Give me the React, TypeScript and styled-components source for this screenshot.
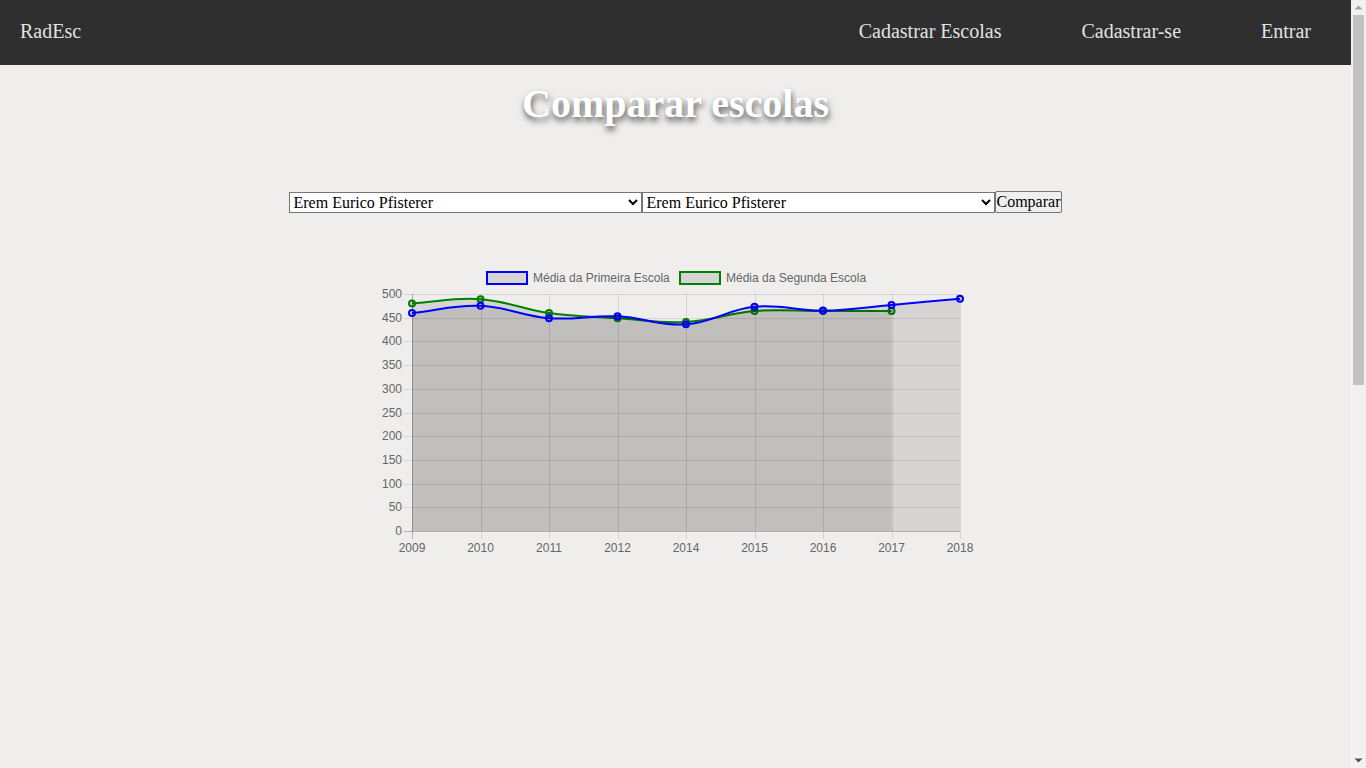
import {FC} from "react";
import styled, {createGlobalStyle} from "styled-components";

const GlobalStyle = createGlobalStyle`
    html, body {
        margin: 0;
        padding: 0;
        height: 100%;
        overflow: hidden;
        background: #efeeec;
        font-family: "Liberation Serif", "Times New Roman", serif;
    }
`;

// window frame: scrolling content plus the classic scrollbar rail
const Viewport = styled.div`
    height: 100vh;
    display: flex;
`;

const Content = styled.div`
    flex: 1;
    overflow-y: auto;
    scrollbar-width: none;

    &::-webkit-scrollbar {
        display: none;
    }
`;

const ScrollRail = styled.div`
    width: 15px;
    flex-shrink: 0;
    background: #f1f1f1;
    display: flex;
    flex-direction: column;
`;

const RailButton = styled.div`
    height: 15px;
    display: flex;
    align-items: center;
    justify-content: center;
`;

const RailTrack = styled.div`
    flex: 1;
    padding: 0 2px;
`;

const RailThumb = styled.div`
    height: 370px;
    background: #c1c1c1;
`;

const Arrow: FC<{down?: boolean}> = ({down}) => (
    <svg width={9} height={5} viewBox="0 0 9 5">
        {down ? (
            <path d="M0.5 0.5h8L4.5 4.5z" fill="#505050"/>
        ) : (
            <path d="M0.5 4.5h8L4.5 0.5z" fill="#a3a3a3"/>
        )}
    </svg>
);

const Page = styled.div`
    min-height: 1530px;
    display: flex;
    flex-direction: column;
`;

const NavBar = styled.nav`
    height: 65px;
    background: #2f2f2f;
    display: flex;
    align-items: center;
    justify-content: space-between;
    color: #e2e2e2;
    font-size: 20px;
    padding-bottom: 2px;
    box-sizing: border-box;
`;

const Brand = styled.a`
    padding-left: 20px;
    color: inherit;
    text-decoration: none;
`;

const NavLinks = styled.ul`
    display: flex;
    list-style: none;
    margin: 0;
    padding: 0;
`;

const NavLink = styled.a`
    display: block;
    padding: 0 40px;
    color: inherit;
    text-decoration: none;
`;

const Main = styled.main`
    display: flex;
    flex-direction: column;
    align-items: center;
`;

const Title = styled.h1`
    margin: 15px 0 0;
    font-size: 40px;
    font-weight: bold;
    color: #ffffff;
    text-shadow: 1px 4px 6px rgba(0, 0, 0, 0.65);
`;

const Form = styled.form`
    margin-top: 64px;
    display: flex;
    align-items: center;
`;

const SchoolSelect = styled.select`
    width: 353px;
    height: 21px;
    font-family: "Liberation Serif", "Times New Roman", serif;
    font-size: 16px;
    color: #000;
    background: #fff;
    border: 1px solid #767676;
    border-radius: 0;
    margin: 0;
`;

const CompareButton = styled.button`
    height: 22px;
    padding: 0 1px;
    margin: 0;
    font-family: "Liberation Serif", "Times New Roman", serif;
    font-size: 16px;
    color: #000;
    background: #efefef;
    border: 1px solid #767676;
    border-radius: 2px;
`;

const ChartBox = styled.div`
    margin-top: 49px;
    width: 621px;
    height: 300px;
`;

// chart geometry (svg coords)
const LEFT = 47;
const RIGHT = 595;
const TOP = 32;
const BOTTOM = 269;
const MAX = 500;

const years = ["2009", "2010", "2011", "2012", "2014", "2015", "2016", "2017", "2018"];
const first = [460, 475, 449, 453, 436, 473, 465, 477, 490];
const second = [480, 489, 460, 449, 441, 464, 464, 464];

type Pt = {x: number; y: number};

const xAt = (i: number) => LEFT + (i * (RIGHT - LEFT)) / (years.length - 1);
const yAt = (v: number) => BOTTOM - (v / MAX) * (BOTTOM - TOP);

const toPoints = (data: number[]): Pt[] => data.map((v, i) => ({x: xAt(i), y: yAt(v)}));

// same bezier as chart.js splineCurve, tension 0.4
const linePath = (pts: Pt[]) => {
    const t = 0.4;
    const ctrl = pts.map((cur, i) => {
        const prev = pts[i - 1] || cur;
        const next = pts[i + 1] || cur;
        const d01 = Math.hypot(cur.x - prev.x, cur.y - prev.y);
        const d12 = Math.hypot(next.x - cur.x, next.y - cur.y);
        const sum = d01 + d12 || 1;
        const fa = (t * d01) / sum;
        const fb = (t * d12) / sum;
        return {
            prev: {x: cur.x - fa * (next.x - prev.x), y: cur.y - fa * (next.y - prev.y)},
            next: {x: cur.x + fb * (next.x - prev.x), y: cur.y + fb * (next.y - prev.y)},
        };
    });
    let d = `M${pts[0].x},${pts[0].y}`;
    for (let i = 1; i < pts.length; i++) {
        const a = ctrl[i - 1].next;
        const b = ctrl[i].prev;
        d += ` C${a.x},${a.y} ${b.x},${b.y} ${pts[i].x},${pts[i].y}`;
    }
    return d;
};

const areaPath = (pts: Pt[]) =>
    `${linePath(pts)} L${pts[pts.length - 1].x},${BOTTOM} L${pts[0].x},${BOTTOM} Z`;

const Series: FC<{data: number[]; color: string}> = ({data, color}) => {
    const pts = toPoints(data);
    return (
        <g>
            <path d={areaPath(pts)} fill="rgba(0,0,0,0.1)"/>
            <path d={linePath(pts)} fill="none" stroke={color} strokeWidth={2}/>
            {pts.map((p, i) => (
                <circle key={i} cx={p.x} cy={p.y} r={3} fill="rgba(0,0,0,0.1)" stroke={color} strokeWidth={2}/>
            ))}
        </g>
    );
};

const ticks = [0, 50, 100, 150, 200, 250, 300, 350, 400, 450, 500];

const LineChart: FC = () => (
    <svg width={621} height={300} viewBox="0 0 621 300">
        {/* legend */}
        <rect x={122} y={10} width={40} height={12} fill="rgba(0,0,0,0.1)" stroke="blue" strokeWidth={2}/>
        <text x={168} y={20} fontSize={12} fill="#666" fontFamily="Liberation Sans, Arial, sans-serif">
            Média da Primeira Escola
        </text>
        <rect x={315} y={10} width={40} height={12} fill="rgba(0,0,0,0.1)" stroke="green" strokeWidth={2}/>
        <text x={361} y={20} fontSize={12} fill="#666" fontFamily="Liberation Sans, Arial, sans-serif">
            Média da Segunda Escola
        </text>

        {/* series, second first so the first one sits on top */}
        <Series data={second} color="green"/>
        <Series data={first} color="blue"/>

        {/* grid */}
        {ticks.map((v) => (
            <g key={v}>
                <line
                    x1={LEFT - 8}
                    x2={RIGHT}
                    y1={Math.round(yAt(v)) + 0.5}
                    y2={Math.round(yAt(v)) + 0.5}
                    stroke={v === 0 ? "rgba(0,0,0,0.25)" : "rgba(0,0,0,0.1)"}
                    strokeWidth={1}
                />
                <text
                    x={LEFT - 10}
                    y={yAt(v) + 4}
                    fontSize={12}
                    fill="#666"
                    textAnchor="end"
                    fontFamily="Liberation Sans, Arial, sans-serif"
                >
                    {v}
                </text>
            </g>
        ))}
        {years.map((y, i) => (
            <g key={y}>
                <line
                    x1={Math.round(xAt(i)) + 0.5}
                    x2={Math.round(xAt(i)) + 0.5}
                    y1={TOP}
                    y2={BOTTOM + 8}
                    stroke={i === 0 ? "rgba(0,0,0,0.25)" : "rgba(0,0,0,0.1)"}
                    strokeWidth={1}
                />
                <text
                    x={xAt(i)}
                    y={290}
                    fontSize={12}
                    fill="#666"
                    textAnchor="middle"
                    fontFamily="Liberation Sans, Arial, sans-serif"
                >
                    {y}
                </text>
            </g>
        ))}
    </svg>
);

const App: FC = () => {
    return (
        <Viewport>
            <GlobalStyle/>
            <Content>
                <Page>
                    <NavBar>
                        <Brand href="#">RadEsc</Brand>
                        <NavLinks>
                            <li><NavLink href="#">Cadastrar Escolas</NavLink></li>
                            <li><NavLink href="#">Cadastrar-se</NavLink></li>
                            <li><NavLink href="#">Entrar</NavLink></li>
                        </NavLinks>
                    </NavBar>
                    <Main>
                        <Title>Comparar escolas</Title>
                        <Form onSubmit={(e) => e.preventDefault()}>
                            <SchoolSelect defaultValue="1">
                                <option value="1">Erem Eurico Pfisterer</option>
                            </SchoolSelect>
                            <SchoolSelect defaultValue="1">
                                <option value="1">Erem Eurico Pfisterer</option>
                            </SchoolSelect>
                            <CompareButton type="submit">Comparar</CompareButton>
                        </Form>
                        <ChartBox>
                            <LineChart/>
                        </ChartBox>
                    </Main>
                </Page>
            </Content>
            <ScrollRail>
                <RailButton><Arrow/></RailButton>
                <RailTrack>
                    <RailThumb/>
                </RailTrack>
                <RailButton><Arrow down/></RailButton>
            </ScrollRail>
        </Viewport>
    );
};

export default App;
